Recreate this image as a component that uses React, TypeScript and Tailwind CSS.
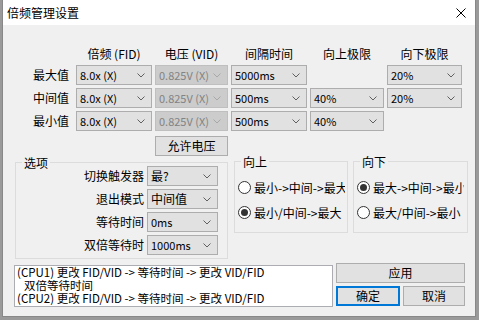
import React from "react";

const FONT = "font-['Noto_Sans_CJK_SC','Noto_Sans',sans-serif]";

function Chevron({ disabled }: { disabled?: boolean }) {
	return (
		<svg width="8" height="5" viewBox="0 0 8 5" className="shrink-0">
			<polyline
				points="0.5,0.5 4,4 7.5,0.5"
				fill="none"
				stroke={disabled ? "#a8a8a8" : "#606060"}
				strokeWidth="1"
			/>
		</svg>
	);
}

function Combo({ value, disabled, cjk }: { value: string; disabled?: boolean; cjk?: boolean }) {
	return (
		<div
			className={`flex h-[20px] items-center justify-between border pl-[3px] pr-[6px] ${
				disabled ? "border-[#bfbfbf] bg-[#cccccc] text-[#838383]" : "border-[#adadad] bg-[#e1e1e1] text-black"
			}`}
		>
			<span className={`whitespace-nowrap ${cjk ? "text-[12px]" : "text-[11px]"}`}>{value}</span>
			<Chevron disabled={disabled} />
		</div>
	);
}

function Radio({ label, checked }: { label: string; checked?: boolean }) {
	return (
		<div className="flex h-[17px] items-center gap-[3px] pl-[3px] whitespace-nowrap">
			<div className="flex h-[13px] w-[13px] shrink-0 items-center justify-center rounded-full border border-[#333333] bg-white">
				{checked && <div className="h-[7px] w-[7px] rounded-full bg-[#333333]" />}
			</div>
			<span className="max-w-[91px] overflow-hidden">{label}</span>
		</div>
	);
}

function Group({ title, className, children }: { title: string; className: string; children: React.ReactNode }) {
	return (
		<div className={`relative border border-[#dcdcdc] ${className}`}>
			<span className="absolute -top-[9px] left-[6px] bg-[#f0f0f0] px-[2px] leading-[17px]">{title}</span>
			{children}
		</div>
	);
}

function Btn({ label, className }: { label: string; className: string }) {
	return (
		<div className={`flex h-[20px] items-center justify-center border bg-[#e1e1e1] ${className}`}>{label}</div>
	);
}

const ROWS: { label: string; cells: (string | null)[] }[] = [
	{ label: "最大值", cells: ["8.0x (X)", "0.825V (X)", "5000ms", null, "20%"] },
	{ label: "中间值", cells: ["8.0x (X)", "0.825V (X)", "500ms", "40%", "20%"] },
	{ label: "最小值", cells: ["8.0x (X)", "0.825V (X)", "500ms", "40%", null] },
];

const HEADERS = ["倍频 (FID)", "电压 (VID)", "间隔时间", "向上极限", "向下极限"];

const OPTIONS = [
	{ label: "切换触发器", value: "最?", cjk: true },
	{ label: "退出模式", value: "中间值", cjk: true },
	{ label: "等待时间", value: "0ms", cjk: false },
	{ label: "双倍等待时", value: "1000ms", cjk: false },
];

export default function App() {
	return (
		<div className={`h-[320px] w-[479px] overflow-hidden bg-[#9a9a9a] text-[12px] text-black ${FONT}`}>
			<div className="ml-[2px] flex h-[317px] w-[474px] flex-col border-x border-b border-[#888888] bg-[#f0f0f0]">
				{/* title bar */}
				<div className="flex h-[25px] shrink-0 items-center justify-between bg-white pl-[4px] pr-[9px]">
					<span className="text-[12px]">倍频管理设置</span>
					<svg width="10" height="10" viewBox="0 0 10 10">
						<path d="M0.5 0.5 L9.5 9.5 M9.5 0.5 L0.5 9.5" stroke="#000" strokeWidth="1" />
					</svg>
				</div>

				<div className="flex flex-col pt-[20px]">
					{/* limits grid */}
					<div className="grid grid-cols-[70px_76px_73px_76px_74px_75px] gap-x-[3px] gap-y-[3px]">
						<div />
						{HEADERS.map((h) => (
							<div key={h} className="h-[17px] text-center leading-[17px] whitespace-nowrap">
								{h}
							</div>
						))}
						{ROWS.map((row) => (
							<React.Fragment key={row.label}>
								<div className="flex h-[20px] items-center justify-end pr-[4px]">{row.label}</div>
								{row.cells.map((c, i) =>
									c === null ? (
										<div key={i} />
									) : (
										<Combo key={i} value={c} disabled={i === 1} />
									),
								)}
							</React.Fragment>
						))}
						<div />
						<div />
						<Btn label="允许电压" className="mt-[2px] border-[#adadad]" />
					</div>

					{/* options + direction groups */}
					<div className="flex items-start pl-[12px]">
						<Group title="选项" className="mt-[6px] h-[97px] w-[213px]">
							<div className="flex flex-col gap-[3px] pt-[3px] pr-[9px]">
								{OPTIONS.map((o) => (
									<div key={o.label} className="flex items-center justify-end gap-[3px]">
										<span className="whitespace-nowrap">{o.label}</span>
										<div className="w-[71px]">
											<Combo value={o.value} cjk={o.cjk} />
										</div>
									</div>
								))}
							</div>
						</Group>
						<Group title="向上" className="mt-[5px] ml-[6px] h-[72px] w-[114px]">
							<div className="flex flex-col gap-[8px] overflow-hidden pt-[17px]">
								<Radio label="最小->中间->最大" />
								<Radio label="最小/中间->最大" checked />
							</div>
						</Group>
						<Group title="向下" className="mt-[5px] ml-[5px] h-[72px] w-[115px]">
							<div className="flex flex-col gap-[8px] overflow-hidden pt-[17px]">
								<Radio label="最大->中间->最小" checked />
								<Radio label="最大/中间->最小" />
							</div>
						</Group>
					</div>

					{/* info box + buttons */}
					<div className="mt-[4px] flex items-start pl-[11px]">
						<div className="mt-[2px] h-[42px] w-[319px] overflow-hidden border border-[#abadb3] bg-white pl-[2px] text-[11.5px] leading-[13px] whitespace-nowrap">
							<div>(CPU1) 更改 FID/VID -&gt; 等待时间 -&gt; 更改 VID/FID</div>
							<div className="pl-[7px]">双倍等待时间</div>
							<div>(CPU2) 更改 FID/VID -&gt; 等待时间 -&gt; 更改 VID/FID</div>
						</div>
						<div className="ml-[3px] flex w-[129px] flex-col gap-[3px]">
							<Btn label="应用" className="border-[#adadad]" />
							<div className="flex gap-[3px]">
								<Btn label="确定" className="w-[64px] border-2 border-[#0078d7]" />
								<Btn label="取消" className="w-[62px] border-[#adadad]" />
							</div>
						</div>
					</div>
				</div>
			</div>
		</div>
	);
}
